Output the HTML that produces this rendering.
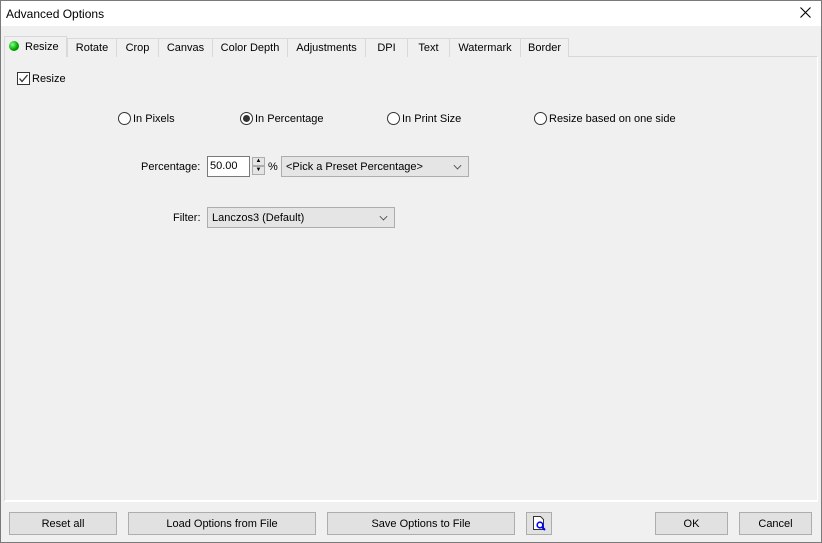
<!DOCTYPE html><html><head><style>
*{box-sizing:border-box;margin:0;padding:0}
body{width:822px;height:543px;background:#f0f0f0;font-family:"Liberation Sans",sans-serif;font-size:11px;color:#000;position:relative;overflow:hidden}
.a{position:absolute}
.win{position:absolute;left:0;top:0;width:822px;height:543px;border:1px solid #7a7a7a}
.tab{position:absolute;top:38px;height:19px;border:1px solid #d9d9d9;border-bottom:none;background:#f0f0f0;text-align:center;line-height:19px}
.btn{position:absolute;top:512px;height:23px;background:#e1e1e1;border:1px solid #adadad;text-align:center;line-height:23px}
.radio{position:absolute;width:13px;height:13px;border:1px solid #333;border-radius:50%;background:#fff}
.combo{position:absolute;height:21px;background:#e5e5e5;border:1px solid #adadad;line-height:20px;padding-left:4px}
.chev{position:absolute;right:7px;top:5px;width:7px;height:7px;border-right:1px solid #444;border-bottom:1px solid #444;transform:rotate(45deg) scale(.8)}
</style></head><body>
<div class="win"></div>
<div class="a" style="left:1px;top:1px;width:820px;height:25px;background:#fff"></div>
<div class="a" style="left:6px;top:7px;font-size:12px">Advanced Options</div>
<svg class="a" style="left:800px;top:7px" width="11" height="11"><path d="M0.5 0.5L10.5 10.5M10.5 0.5L0.5 10.5" stroke="#000" stroke-width="1.1"/></svg>
<div class="a" style="left:4px;top:56px;width:814px;height:446px;border:1px solid #d9d9d9;border-bottom:2px solid #fff;border-right:1px solid #fff"></div>
<div class="tab" style="left:67px;width:50px">Rotate</div>
<div class="tab" style="left:116px;width:43px">Crop</div>
<div class="tab" style="left:158px;width:55px">Canvas</div>
<div class="tab" style="left:212px;width:76px">Color Depth</div>
<div class="tab" style="left:287px;width:79px">Adjustments</div>
<div class="tab" style="left:365px;width:43px">DPI</div>
<div class="tab" style="left:407px;width:43px">Text</div>
<div class="tab" style="left:449px;width:72px">Watermark</div>
<div class="tab" style="left:520px;width:49px">Border</div>
<div class="tab" style="left:4px;top:36px;width:63px;height:21px;background:#f0f0f0;border-color:#d9d9d9;line-height:20px;text-align:left;padding-left:20px">Resize</div>
<div class="a" style="left:9px;top:41px;width:10px;height:10px;border-radius:50%;background:radial-gradient(circle at 35% 35%,#8f8,#0a0 55%,#060)"></div>
<div class="a" style="left:17px;top:72px;width:13px;height:13px;border:1px solid #333;background:#fff"></div>
<svg class="a" style="left:17px;top:72px" width="13" height="13"><path d="M2.5 6.5 L5 9.5 L10.5 3" stroke="#333" stroke-width="1.3" fill="none"/></svg>
<div class="a" style="left:32px;top:73px">Resize</div>
<div class="radio" style="left:118px;top:112px"></div><div class="a" style="left:133px;top:113px">In Pixels</div>
<div class="radio" style="left:240px;top:112px"></div><div class="a" style="left:243px;top:115px;width:7px;height:7px;border-radius:50%;background:#333"></div><div class="a" style="left:255px;top:113px">In Percentage</div>
<div class="radio" style="left:387px;top:112px"></div><div class="a" style="left:402px;top:113px">In Print Size</div>
<div class="radio" style="left:534px;top:112px"></div><div class="a" style="left:549px;top:113px">Resize based on one side</div>
<div class="a" style="left:141px;top:161px">Percentage:</div>
<div class="a" style="left:207px;top:156px;width:43px;height:21px;background:#fff;border:1px solid #7a7a7a;padding:3px 0 0 2px">50.00</div>
<div class="a" style="left:252px;top:157px;width:13px;height:9px;border:1px solid #adadad;background:#e5e5e5;font-size:6px;text-align:center;line-height:7px">▲</div>
<div class="a" style="left:252px;top:166px;width:13px;height:9px;border:1px solid #adadad;background:#e5e5e5;font-size:6px;text-align:center;line-height:7px">▼</div>
<div class="a" style="left:268px;top:161px">%</div>
<div class="combo" style="left:281px;top:156px;width:188px">&lt;Pick a Preset Percentage&gt;<div class="chev"></div></div>
<div class="a" style="left:173px;top:212px">Filter:</div>
<div class="combo" style="left:207px;top:207px;width:188px">Lanczos3 (Default)<div class="chev"></div></div>
<div class="btn" style="left:9px;width:108px">Reset all</div>
<div class="btn" style="left:128px;width:188px">Load Options from File</div>
<div class="btn" style="left:327px;width:188px">Save Options to File</div>
<div class="btn" style="left:526px;width:26px"></div>
<svg class="a" style="left:531px;top:515px" width="17" height="17"><path d="M2.5 1.5h7l3 3v10h-10z" fill="#fff" stroke="#333"/><circle cx="9" cy="10" r="2.8" fill="none" stroke="#00f" stroke-width="1.6"/><path d="M11 12l3 3" stroke="#00f" stroke-width="2"/></svg>
<div class="btn" style="left:655px;width:73px">OK</div>
<div class="btn" style="left:739px;width:73px">Cancel</div>
</body></html>
